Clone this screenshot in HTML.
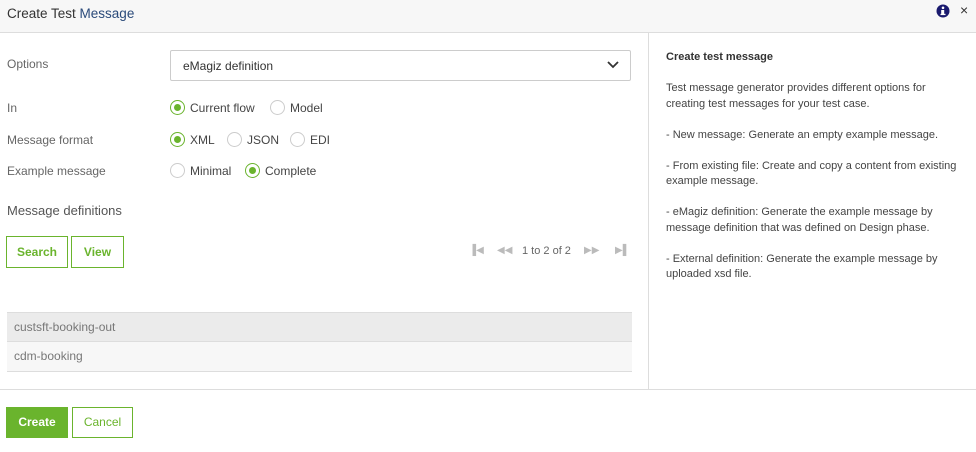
<!DOCTYPE html><html><head><style>
*{box-sizing:border-box;margin:0;padding:0}
body{width:976px;height:452px;background:#fff;font-family:"Liberation Sans",sans-serif;font-size:12px;color:#333;position:relative;overflow:hidden}
.a{position:absolute}
.hdr{left:0;top:0;width:976px;height:33px;background:#f7f7f7;border-bottom:1px solid #ddd}
.lbl{color:#666;font-size:12px}
.r{position:absolute;width:15px;height:15px;border-radius:50%;border:1px solid #ccc;background:#fff}
.r.on{border-color:#6ab42d}
.r.on:after{content:"";position:absolute;left:3px;top:3px;width:7px;height:7px;border-radius:50%;background:#6ab42d}
.rt{position:absolute;font-size:12px;color:#444}
.btn{position:absolute;border:1px solid #6ab42d;color:#6ab42d;font-weight:bold;font-size:12px;text-align:center;background:#fff}
.p{font-size:11px;color:#444;line-height:15.5px}
</style></head><body>
<div class="a hdr"></div>
<div class="a" style="left:7px;top:6px;font-size:13.5px;color:#333">Create Test <span style="color:#2a4a7a">Message</span></div>
<svg class="a" style="left:936px;top:4px" width="14" height="14"><circle cx="7" cy="7" r="6.5" fill="#1a1a6e"/><circle cx="7" cy="3.8" r="1.3" fill="#fff"/><rect x="5.2" y="6" width="3" height="4.5" fill="#fff"/><rect x="4.5" y="9.8" width="5" height="1.3" fill="#fff"/></svg>
<div class="a" style="left:960px;top:2px;font-size:14px;color:#333">×</div>

<div class="a lbl" style="left:7px;top:57px">Options</div>
<div class="a" style="left:170px;top:50px;width:461px;height:31px;border:1px solid #ccc;border-radius:2px"></div>
<div class="a" style="left:183px;top:59px;font-size:12px;color:#333">eMagiz definition</div>
<svg class="a" style="left:606px;top:60px" width="14" height="10"><path d="M2 2 L7 7 L12 2" stroke="#333" stroke-width="1.8" fill="none"/></svg>

<div class="a lbl" style="left:7px;top:101px">In</div>
<div class="r on" style="left:170px;top:100px"></div><div class="rt" style="left:190px;top:101px">Current flow</div>
<div class="r" style="left:270px;top:100px"></div><div class="rt" style="left:290px;top:101px">Model</div>

<div class="a lbl" style="left:7px;top:133px">Message format</div>
<div class="r on" style="left:170px;top:132px"></div><div class="rt" style="left:190px;top:133px">XML</div>
<div class="r" style="left:227px;top:132px"></div><div class="rt" style="left:247px;top:133px">JSON</div>
<div class="r" style="left:290px;top:132px"></div><div class="rt" style="left:310px;top:133px">EDI</div>

<div class="a lbl" style="left:7px;top:164px">Example message</div>
<div class="r" style="left:170px;top:163px"></div><div class="rt" style="left:190px;top:164px">Minimal</div>
<div class="r on" style="left:245px;top:163px"></div><div class="rt" style="left:265px;top:164px">Complete</div>

<div class="a" style="left:7px;top:203px;font-size:13px;color:#555">Message definitions</div>
<div class="btn" style="left:6px;top:236px;width:62px;height:32px;line-height:30px">Search</div>
<div class="btn" style="left:71px;top:236px;width:53px;height:32px;line-height:30px">View</div>

<div class="a" style="left:469px;top:245px;color:#bbb;font-size:10px">▐◀</div>
<div class="a" style="left:497px;top:245px;color:#bbb;font-size:10px">◀◀</div>
<div class="a" style="left:522px;top:245px;color:#666;font-size:11px">1 to 2 of 2</div>
<div class="a" style="left:584px;top:245px;color:#bbb;font-size:10px">▶▶</div>
<div class="a" style="left:615px;top:245px;color:#bbb;font-size:10px">▶▌</div>

<div class="a" style="left:7px;top:312px;width:625px;height:30px;background:#ebebeb;border-top:1px solid #ddd;border-bottom:1px solid #ddd"></div>
<div class="a" style="left:14px;top:320px;color:#777">custsft-booking-out</div>
<div class="a" style="left:7px;top:342px;width:625px;height:30px;background:#f7f7f7;border-bottom:1px solid #ddd"></div>
<div class="a" style="left:14px;top:349px;color:#777">cdm-booking</div>

<div class="a" style="left:648px;top:33px;width:1px;height:356px;background:#ddd"></div>
<div class="a" style="left:666px;top:51px;font-size:11px;font-weight:bold;color:#333">Create test message</div>
<div class="a p" style="left:666px;top:81px;width:300px">Test message generator provides different options for creating test messages for your test case.<br><br>- New message: Generate an empty example message.<br><br>- From existing file: Create and copy a content from existing example message.<br><br>- eMagiz definition: Generate the example message by message definition that was defined on Design phase.<br><br>- External definition: Generate the example message by uploaded xsd file.</div>

<div class="a" style="left:0;top:389px;width:976px;height:1px;background:#ddd"></div>
<div class="btn" style="left:6px;top:407px;width:62px;height:31px;line-height:29px;background:#6ab42d;color:#fff">Create</div>
<div class="btn" style="left:72px;top:407px;width:61px;height:31px;line-height:29px;font-weight:normal">Cancel</div>
</body></html>
